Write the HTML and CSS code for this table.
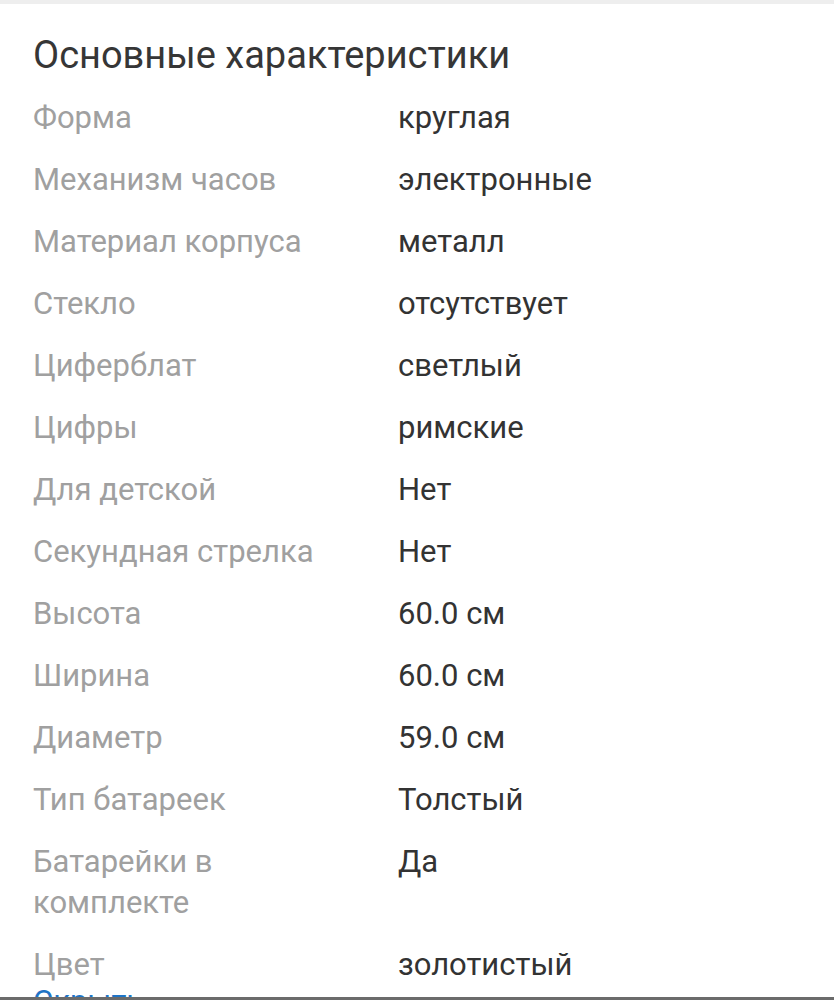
FILE: index.html
```html
<!DOCTYPE html>
<html lang="ru">
<head>
<meta charset="utf-8">
<link rel="stylesheet" href="styles.css">
</head>
<body>
<div class="topband"></div>
<section class="card">
  <h2 class="title">Основные характеристики</h2>
  <dl class="specs">
    <div class="row"><dt>Форма</dt><dd>круглая</dd></div>
    <div class="row"><dt>Механизм часов</dt><dd>электронные</dd></div>
    <div class="row"><dt>Материал корпуса</dt><dd>металл</dd></div>
    <div class="row"><dt>Стекло</dt><dd>отсутствует</dd></div>
    <div class="row"><dt>Циферблат</dt><dd>светлый</dd></div>
    <div class="row"><dt>Цифры</dt><dd>римские</dd></div>
    <div class="row"><dt>Для детской</dt><dd>Нет</dd></div>
    <div class="row"><dt>Секундная стрелка</dt><dd>Нет</dd></div>
    <div class="row"><dt>Высота</dt><dd>60.0 см</dd></div>
    <div class="row"><dt>Ширина</dt><dd>60.0 см</dd></div>
    <div class="row"><dt>Диаметр</dt><dd>59.0 см</dd></div>
    <div class="row"><dt>Тип батареек</dt><dd>Толстый</dd></div>
    <div class="row"><dt>Батарейки в комплекте</dt><dd>Да</dd></div>
    <div class="row"><dt>Цвет</dt><dd>золотистый</dd></div>
  </dl>
  <a class="toggle" href="#">Скрыть</a>
</section>
<div class="bottomline"></div>
</body>
</html>
```

FILE: styles.css
```css
html, body {
  margin: 0;
  padding: 0;
  background: #ffffff;
}
body {
  font-family: Roboto, "Noto Sans", "Liberation Sans", sans-serif;
  overflow: hidden;
  height: 1000px;
}
.topband {
  height: 4px;
  background: #eeeeee;
}
.card {
  padding: 27px 20px 0 33px;
}
.title {
  margin: 0;
  font-weight: 400;
  font-size: 38px;
  line-height: 48px;
  color: #363636;
}
.specs {
  margin: 18px 0 0 0;
  display: flex;
  flex-direction: column;
  gap: 21px;
}
.row {
  display: grid;
  grid-template-columns: 365px 1fr;
  font-size: 31px;
  line-height: 41px;
}
.row dt {
  color: #a0a0a0;
  padding-right: 40px;
}
.row dd {
  margin: 0;
  color: #333333;
}
.toggle {
  display: block;
  margin-top: 1px;
  font-size: 31px;
  line-height: 32px;
  color: #1f74c6;
  text-decoration: none;
}
.bottomline {
  position: fixed;
  left: 0;
  right: 0;
  bottom: 0;
  height: 3px;
  background: #6b6b6b;
}
```
